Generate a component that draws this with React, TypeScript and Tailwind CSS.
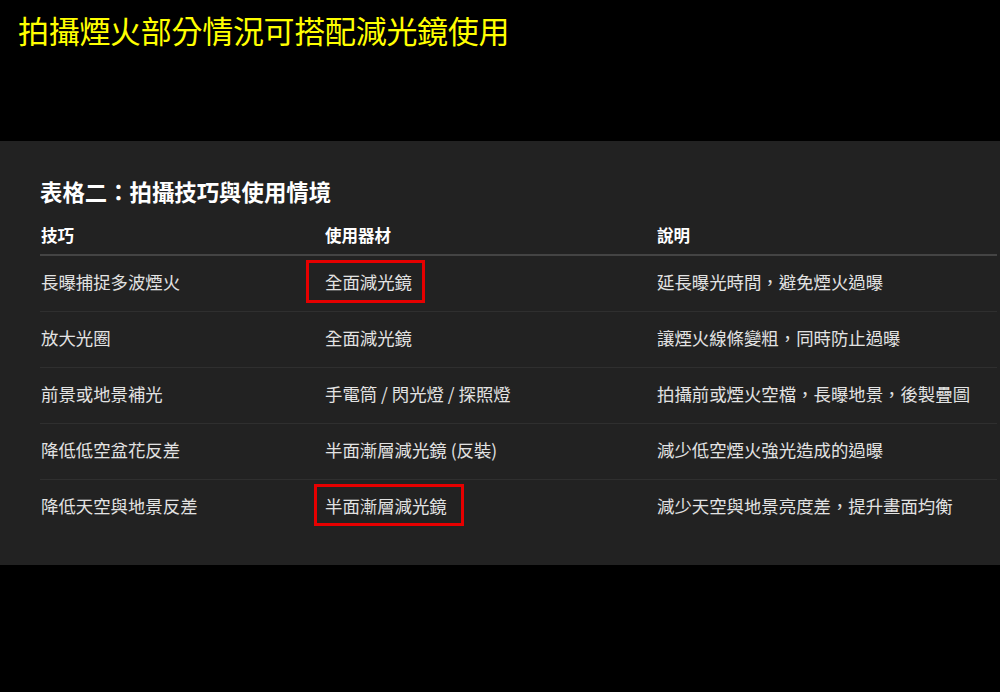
const rows = [
  { tech: "長曝捕捉多波煙火", gear: "全面減光鏡", note: "延長曝光時間，避免煙火過曝", box: "a" },
  { tech: "放大光圈", gear: "全面減光鏡", note: "讓煙火線條變粗，同時防止過曝" },
  { tech: "前景或地景補光", gear: "手電筒 / 閃光燈 / 探照燈", note: "拍攝前或煙火空檔，長曝地景，後製疊圖" },
  { tech: "降低低空盆花反差", gear: "半面漸層減光鏡 (反裝)", note: "減少低空煙火強光造成的過曝" },
  { tech: "降低天空與地景反差", gear: "半面漸層減光鏡", note: "減少天空與地景亮度差，提升畫面均衡", box: "b" },
];

const font = { fontFamily: '"Noto Sans CJK TC", "Noto Sans", sans-serif' };

export default function App() {
  return (
    <div className="min-h-[692px] w-[1000px] bg-black" style={font}>
      {/* 頂部標題 */}
      <div className="h-[141px] px-[18px] pt-[9px]">
        <h1 className="text-[31px] leading-[42px] tracking-[-0.3px] text-[#ffff00]">拍攝煙火部分情況可搭配減光鏡使用</h1>
      </div>

      {/* 表格區 */}
      <div className="bg-[#222222] pb-[29px] pl-[40px] pr-[3px] pt-[35px]">
        <h2 className="text-[22.4px] font-bold leading-[30px] text-white">表格二：拍攝技巧與使用情境</h2>

        <div className="grid grid-cols-[285px_332px_1fr] border-b-2 border-[#444444] pb-[6px] pt-[16px] text-[16.5px] font-bold leading-[26px] text-white">
          <div className="pl-px">技巧</div>
          <div>使用器材</div>
          <div>說明</div>
        </div>

        {rows.map((r, i) => (
          <div
            key={i}
            className={`grid h-[56px] grid-cols-[285px_332px_1fr] items-center pb-[3px] text-[17.4px] text-[#e2e2e2] ${i < rows.length - 1 ? "border-b border-[#2f2f2f]" : ""}`}
          >
            <div className="pl-px">{r.tech}</div>
            <div>
              <span className="relative">
                {r.gear}
                {r.box === "a" && (
                  <span className="absolute -bottom-[9px] -left-[19px] -right-[13px] -top-[9px] border-[3px] border-[#e60000]" />
                )}
                {r.box === "b" && (
                  <span className="absolute -bottom-[8px] -left-[11px] -right-[17px] -top-[9px] border-[3px] border-[#e60000]" />
                )}
              </span>
            </div>
            <div>{r.note}</div>
          </div>
        ))}
      </div>
    </div>
  );
}
